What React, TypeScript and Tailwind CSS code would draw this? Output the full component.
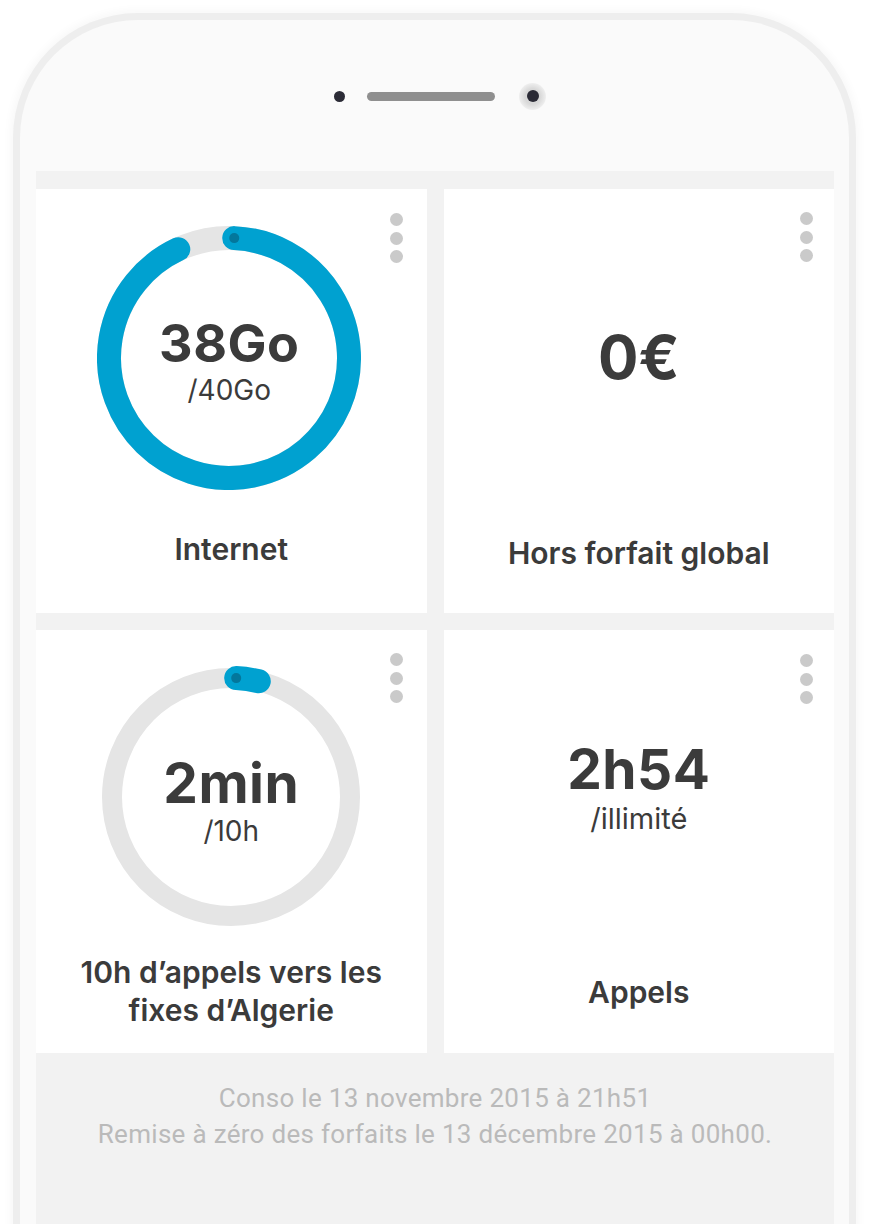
import React from "react";

const BLUE = "#00a1d0";
const TRACK = "#e5e5e5";

// angle in degrees, measured clockwise from 12 o'clock
function polar(c: number, r: number, deg: number) {
  const a = (deg * Math.PI) / 180;
  return { x: c + r * Math.sin(a), y: c - r * Math.cos(a) };
}

function arcPath(c: number, r: number, from: number, to: number) {
  const s = polar(c, r, from);
  const e = polar(c, r, to);
  const large = to - from > 180 ? 1 : 0;
  return `M ${s.x} ${s.y} A ${r} ${r} 0 ${large} 1 ${e.x} ${e.y}`;
}

type RingProps = {
  r: number;
  track: number;
  bar: number;
  from: number;
  to: number;
  value: string;
  total: string;
  valueSize: string;
};

function Ring({ r, track, bar, from, to, value, total, valueSize }: RingProps) {
  const c = 132;
  const dot = polar(c, r, from);
  return (
    <div className="relative w-[264px] h-[264px]">
      <svg width="264" height="264" viewBox="0 0 264 264">
        <circle cx={c} cy={c} r={r} fill="none" stroke={TRACK} strokeWidth={track} />
        <path d={arcPath(c, r, from, to)} fill="none" stroke={BLUE} strokeWidth={bar} strokeLinecap="round" />
        <circle cx={dot.x} cy={dot.y} r="5" fill="#03779c" />
      </svg>
      <div className="absolute inset-0 flex flex-col items-center justify-center gap-[6px] pt-[6px] text-[#3b3b3b]">
        <div className={`${valueSize} leading-none font-bold tracking-[0.5px]`}>{value}</div>
        <div className="text-[28px] leading-none">{total}</div>
      </div>
    </div>
  );
}

function Dots({ pos }: { pos: string }) {
  return (
    <div className={`absolute ${pos} flex flex-col gap-[5.5px]`}>
      <span className="w-[13px] h-[13px] rounded-full bg-[#cacaca]" />
      <span className="w-[13px] h-[13px] rounded-full bg-[#cacaca]" />
      <span className="w-[13px] h-[13px] rounded-full bg-[#cacaca]" />
    </div>
  );
}

export default function App() {
  return (
    <div
      className="w-[873px] h-[1224px] overflow-hidden bg-white pt-[13px]"
      style={{ fontFamily: "Inter, 'Liberation Sans', sans-serif" }}
    >
      <div className="ml-[13px] w-[843px] h-[1300px] border-[7px] border-b-0 border-[#eeeeee] rounded-t-[125px] bg-[#fafafa] pl-[16px] pr-[15px] shadow-[0_0_8px_3px_rgba(0,0,0,0.03)]">
        {/* earpiece */}
        <div className="mt-[62px] h-[28px] flex items-center pl-[298px]">
          <span className="w-[11px] h-[11px] rounded-full bg-[#2b2b36]" />
          <span className="ml-[22px] w-[128px] h-[9px] rounded-full bg-[#8f8f8f]" />
          <span className="ml-[24px] w-[27px] h-[27px] rounded-full bg-[radial-gradient(circle,#d8d8d8_40%,#f2f2f2_75%)] flex items-center justify-center">
            <span className="w-[12px] h-[12px] rounded-full bg-[#2b2b36]" />
          </span>
        </div>

        <div className="mt-[61px] bg-[#f2f2f2] pt-[18px]">
          <div className="grid grid-cols-2 gap-[17px]">
            <div className="relative bg-white h-[424px] flex flex-col items-center">
              <Dots pos="top-[24px] right-[24px]" />
              <div className="mt-[37px] mr-[4px]">
                <Ring r={120} track={24} bar={24} from={2.5} to={335} value="38Go" total="/40Go" valueSize="text-[52px]" />
              </div>
              <div className="mt-[41px] text-[30px] leading-[36px] font-semibold text-[#3b3b3b]">Internet</div>
            </div>

            <div className="relative bg-white h-[424px] flex flex-col items-center">
              <Dots pos="top-[23px] right-[21px]" />
              <div className="mt-[138px] text-[60px] leading-none font-bold text-[#3b3b3b]">0€</div>
              <div className="mt-[148px] text-[30px] leading-[36px] font-semibold text-[#3b3b3b]">Hors forfait global</div>
            </div>

            <div className="relative bg-white h-[423px] flex flex-col items-center">
              <Dots pos="top-[23px] right-[24px]" />
              <div className="mt-[35px]">
                <Ring r={119} track={20} bar={24} from={2.5} to={13.5} value="2min" total="/10h" valueSize="text-[55px]" />
              </div>
              <div className="mt-[24px] text-[30px] leading-[38px] font-semibold text-[#3b3b3b] text-center">
                10h d’appels vers les
                <br />
                fixes d’Algerie
              </div>
            </div>

            <div className="relative bg-white h-[423px] flex flex-col items-center">
              <Dots pos="top-[24px] right-[21px]" />
              <div className="mt-[112px] text-[55px] leading-none font-bold tracking-[0.5px] text-[#3b3b3b]">2h54</div>
              <div className="mt-[7px] text-[29px] leading-none text-[#3b3b3b]">/illimité</div>
              <div className="mt-[141px] text-[30px] leading-[36px] font-semibold text-[#3b3b3b]">Appels</div>
            </div>
          </div>

          <div
            className="pt-[27px] h-[300px] text-center text-[26px] leading-[36px] tracking-[0.3px] text-[#bababa]"
            style={{ fontFamily: "Roboto, 'Liberation Sans', sans-serif" }}
          >
            <div>Conso le 13 novembre 2015 à 21h51</div>
            <div>Remise à zéro des forfaits le 13 décembre 2015 à 00h00.</div>
          </div>
        </div>
      </div>
    </div>
  );
}
